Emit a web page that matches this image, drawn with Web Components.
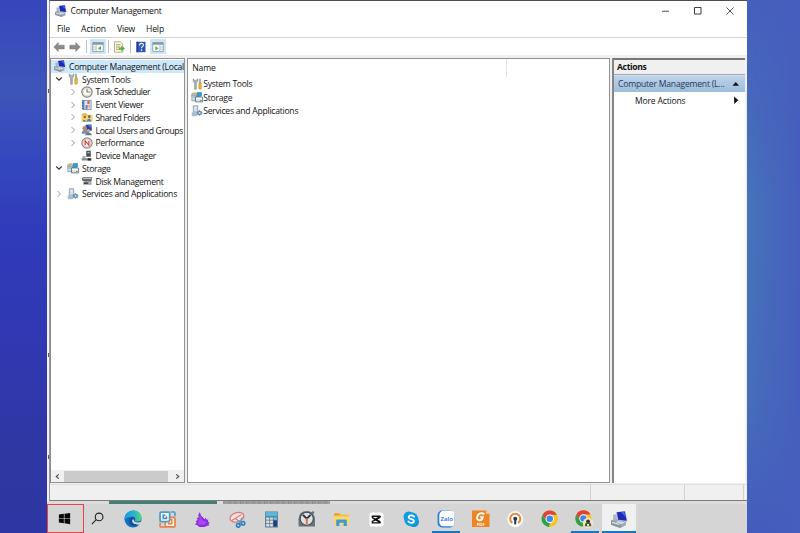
<!DOCTYPE html>
<html lang="en">
<head>
<meta charset="utf-8">
<title>Computer Management</title>
<style>
html,body{margin:0;width:800px;height:533px;overflow:hidden;font-family:"Open Sans","Noto Sans",sans-serif;font-size:8.6px;color:#111}
</style>
</head>
<body>
<desk-top></desk-top>
<script>
const ICONS = {
computer:`<path d="M0 9l5-2 9 3v3.500l-5 2.500L0 13z" fill="#9daab6"/><path d="M0 9l9 2.500V16L0 13z" fill="#8493a0"/><path d="M1 10.700l7 2" stroke="#e6eaed" stroke-width="1.200"/><path d="M2 3.500l3.500-.500V8L2 8.500z" fill="#a9b8c4"/><path d="M4.500 1l9-1 2 10-9-1z" fill="#b9c0d4"/><path d="M5.500 1.200l7.500-.800 1.800 8.800-8-.900z" fill="#1a2bb8"/><path d="M9.500 1.200l3-.400 1.200 5z" fill="#4a66de"/><path d="M6.500 9.700l6.500 1-3 1.500-5.500-1.500z" fill="#dce1e5"/>`,
tools:`<path d="M3 1v4l2 1.500V15h2V6.500L9 5V1L7 3.500H5z" fill="#b5babe" stroke="#71777b" stroke-width=".800"/><path d="M11 1h2v6h-2z" fill="#89949c"/><path d="M10.500 7h3.200v7.200q-1.600 1.500-3.200 0z" fill="#f3bd34" stroke="#a3771c" stroke-width=".700"/>`,
clock:`<circle cx="8" cy="8" r="6.900" fill="#eee9dc" stroke="#85857f" stroke-width="1.600"/><circle cx="8" cy="8" r="4.800" fill="#fff" stroke="#d9c99e" stroke-width=".700"/><path d="M8 4v4h3.600" fill="none" stroke="#555" stroke-width="1.200"/>`,
event:`<path d="M2 1.500h12v13H2z" fill="#687eae"/><path d="M4.500 2.500h8.500v11H4.500z" fill="#dee5f2"/><path d="M2 2v12" stroke="#303f68" stroke-width="1.500" stroke-dasharray="1 1"/><path d="M8.500 3h3v3.500h-3z" fill="#d65152"/><path d="M6 8h3v5H6z" fill="#6787c6"/><path d="M10 8h2v4h-2z" fill="#e3ae45"/>`,
folder:`<path d="M1 5l1-2h5l1 2h7v9H1z" fill="#deb850"/><path d="M1 6h14v8H1z" fill="#f2d680"/><circle cx="5" cy="8" r="1.700" fill="#a76432"/><path d="M2.500 14q0-5 5 0z" fill="#448b69"/><circle cx="11" cy="7.500" r="1.700" fill="#8c542d"/><path d="M7 14q4-8 7 0z" fill="#4f80bc"/>`,
users:`<path d="M6 1l8-.500.500 8-7 1z" fill="#2440ae"/><path d="M9 2l4-.300v3z" fill="#6d8ce0"/><circle cx="5" cy="5.500" r="3" fill="#bf8560"/><path d="M1 13q0-5 4-5t5 5z" fill="#748eae"/><circle cx="10" cy="9" r="2.200" fill="#d2a57c"/><path d="M5 15q5-8 10 0z" fill="#6b788b"/>`,
perf:`<circle cx="8" cy="8" r="6.800" fill="#fff" stroke="#888" stroke-width="1.600"/><path d="M5.500 11V5l5 6V5" fill="none" stroke="#cc3538" stroke-width="1.500"/><circle cx="8" cy="8" r="5.200" fill="none" stroke="#dc8585" stroke-width=".700"/>`,
device:`<path d="M7 1h6v8H7z" fill="#454c51"/><path d="M8.500 2.500h3v2h-3z" fill="#b3b9bc"/><path d="M2 8h4v4H2z" fill="#a7adb2"/><path d="M1 11h13v3H1z" fill="#83898d"/><path d="M9 11h4v3H9z" fill="#25292c"/>`,
storage:`<path d="M1 3l2-1.500h4l1 1.500h5v5H1z" fill="#ecc65a"/><path d="M2 5h11v8H2z" fill="#5da6ca"/><path d="M1 4h6v9H1z" fill="#d6dadc" stroke="#75848d" stroke-width=".800"/><path d="M2 6h4M2 8h4" stroke="#5d9cc0"/><path d="M8 1.500h6.500V7H8z" fill="#2f9bd0"/><path d="M6 8h9.500v6.500H6z" fill="#dde3e8" stroke="#4c6376"/><path d="M7 9h7.500v1.500H7z" fill="#fff"/><path d="M12 12h2v1.200h-2z" fill="#37a83c"/>`,
disk:`<path d="M1 5l2-2h12l-1 5H2z" fill="#606468"/><path d="M3 4h11v1.600H3z" fill="#b9bdc0"/><path d="M3 9l2-1h9v5H3z" fill="#989ca0"/><path d="M4 10h5v2H4z" fill="#3b3f43"/><path d="M11 10h2v1h-2z" fill="#e4e6e7"/>`,
services:`<path d="M3 1h6v12H3z" fill="#b8c7d3" stroke="#71889b" stroke-width=".800"/><path d="M4 3h4M4 5h4M4 7h4" stroke="#fff"/><path d="M1 10h7v5H1z" fill="#a6bdcf"/><circle cx="11.500" cy="10.500" r="3" fill="#7aa3c5"/><path d="M11.500 6.500v8M7.500 10.500h8M9 8l5 5M14 8l-5 5" stroke="#517fa9" stroke-width="1.100"/><circle cx="11.500" cy="10.500" r="1.200" fill="#e5eef4"/>`,
back:`<path d="M1 8l6-6v3.500h8v5H7V14z" fill="#8b8b8b" stroke="#6f6f6f" stroke-width=".600"/>`,
forward:`<path d="M15 8L9 2v3.500H1v5h8V14z" fill="#8b8b8b" stroke="#6f6f6f" stroke-width=".600"/>`,
panel:`<path d="M1 2h14v12H1z" fill="#f9fcfb" stroke="#83929b"/><path d="M1 2h14v3H1z" fill="#8798a3"/><path d="M5.500 5v9M1 8h4M1 11h4" stroke="#a5b3ba"/><path d="M12 6.500L8 9.500l4 3z" fill="#4cae4c"/>`,
panelr:`<path d="M1 2h14v12H1z" fill="#f9fcfb" stroke="#83929b"/><path d="M1 2h14v3H1z" fill="#8798a3"/><path d="M10.500 5v9M11 8h4M11 11h4" stroke="#a5b3ba"/><path d="M4.500 6.500l4 3-4 3z" fill="#4cae4c"/>`,
exportlist:`<path d="M2 1h8l3 3v11H2z" fill="#fff5cf" stroke="#a19a78"/><path d="M4 5h6M4 8h5M4 11h5" stroke="#827e69"/><path d="M8 8.500h3V6l5 4-5 4v-2.500H8z" fill="#55b34a"/>`,
help:`<path d="M2 1h12v14H2z" fill="#2e53bb"/><path d="M2 1h2v14H2z" fill="#213d8f"/><path d="M6 6q0-3 2.700-3 2.500 0 2.500 2.200 0 1.500-1.500 2.300-1 .600-1 2" fill="none" stroke="#fff" stroke-width="1.500"/><circle cx="8.700" cy="12.200" r="1.100" fill="#fff"/>`,
win:`<path d="M2 3.800l5.300-.800v4.600H2zM8 2.900l6-.900v5.600H8zM2 8.300h5.300v4.700L2 12.200zM8 8.300h6V14l-6-.900z" fill="#080808"/>`,
search:`<circle cx="9.700" cy="6.300" r="4.100" fill="none" stroke="#222" stroke-width="1.200"/><path d="M6.700 9.300L2 14" stroke="#222" stroke-width="1.200"/>`,
edge:`<defs><linearGradient id="a"><stop stop-color="#1998dc"/><stop offset=".600" stop-color="#28b9cf"/><stop offset="1" stop-color="#61d568"/></linearGradient></defs><circle cx="8" cy="8" r="7.600" fill="#1471c4"/><path d="M.500 8.500C.500-2 15.500-2 15.600 7c0 3-3.600 3.700-6 2.600 1.300-1.300.200-3.700-2.100-3.700C4 5.900 2 7 .500 8.500z" fill="url(#a)"/><path d="M4.400 10c0-2.200 1.500-3.600 3.200-4 2 .400 2.700 2.200 2 3.600-.800 1.500 2.100 3.700 5 1.800C10 16.500 4.400 14.500 4.400 10z" fill="#164f9d"/><path d="M9 8.500c-.800 2.500 3.500 3.600 7 1.500v2.500C11 14 7 12 7.200 9.500q.200-1.500 1.800-1z" fill="#d5d5d5"/>`,
vm:`<g fill="#f7f7f7" stroke-width="1.600"><path d="M8 6h6q1 0 1 1v7q0 1-1 1H7q-1 0-1-1V6z" stroke="#e58143"/><path d="M2 1h7q1 0 1 1v7q0 1-1 1H2q-1 0-1-1V2q0-1 1-1z" stroke="#4b9ac8"/></g><path d="M1 11v3q0 1 1 1h4" fill="none" stroke="#e58143" stroke-width="1.500"/><path d="M11 1h3q1 0 1 1v3" fill="none" stroke="#4b9ac8" stroke-width="1.500"/><path d="M6 4H4v3h3V5" fill="none" stroke="#3c91c3" stroke-width="1.500"/><path d="M9 9v3h3V8h-2" fill="none" stroke="#e58143" stroke-width="1.500"/>`,
horse:`<path d="M5.500 1l1 3.200L9 6.500l.500 1.500 1.500-1.700 1 2 1.500-.300-.300 2.300 1.800.500-1.400 1.200.800 1.500-2.500.700-2 .800H5L3.300 13.500 1 13l1.500-2L1.500 10 3.500 8 2.500 6.500 4.500 6 4 4z" fill="#8c2be0"/><path d="M5.500 4l2.500 5 4 1-2 3H5l-1.500-2L5 8z" fill="#a64af4"/>`,
snip:`<g transform="rotate(-18 7 6)"><ellipse cx="7.500" cy="6" rx="6.700" ry="4.300" fill="#f5e4e4" stroke="#dc7478" stroke-width="1.200"/><path d="M2 7.500L12 5" stroke="#d77e81"/></g><path d="M6 7l6.500 5M12.500 6L9 13" stroke="#8694a1" stroke-width="1.200"/><circle cx="13.200" cy="11.500" r="1.700" fill="none" stroke="#247fc4" stroke-width="1.400"/><circle cx="8.700" cy="13.500" r="1.700" fill="none" stroke="#247fc4" stroke-width="1.400"/>`,
calc:`<path d="M2 .500h12v15H2z" fill="#587586"/><path d="M2.500 1h11v4h-11z" fill="#57b9de"/><path d="M3 6h3v2.300H3zM6.700 6h2.600v2.300H6.700zM3 9h3v2.300H3zM6.700 9h2.600v2.300H6.700zM3 12h3v2.500H3zM6.700 12h2.600v2.500H6.700z" fill="#d6e0e4"/><path d="M10 6h3v2.300h-3z" fill="#79c8e5"/><path d="M10 9h3v5.500h-3z" fill="#173f80"/>`,
alarm:`<path d="M.500 15V8Q1 1 8 1q3 0 4 1l2-1 1 1-1 2q1.500 2 1.500 4v7z" fill="#69727a"/><circle cx="8" cy="8" r="6" fill="#dde1e3" stroke="#414b54"/><path d="M4.500 4.500L8 8l3.500-3.500" fill="none" stroke="#27323a" stroke-width="1.700"/><path d="M8 7.500V13" stroke="#dc7048" stroke-width="1.800"/>`,
explorer:`<path d="M1 2h5l1.500 1.500H15V13H1z" fill="#f4b93d"/><path d="M1 5h14v8H1z" fill="#ffd968"/><path d="M3 14V9q0-1 1-1h8q1 0 1 1v5h-3v-3H6v3z" fill="#3b9bd3"/><path d="M1 3h5" stroke="#d69523"/>`,
capcut:`<rect x=".500" y=".500" width="15" height="15" rx="3" fill="#fff"/><path d="M3.500 6V4.500h8V6l-8 4v1.500h8V10l-8-4M12.500 4.500L10 6l-4 2 4 2 2.500 1.500" fill="none" stroke="#111" stroke-width="1.400"/>`,
skype:`<circle cx="5.500" cy="5.500" r="5" fill="#0c9dde"/><circle cx="10.500" cy="10.500" r="5" fill="#0d8cdb"/><circle cx="8" cy="8" r="6.800" fill="#0a9ee1"/><path d="M10.800 5.500C9.500 3.700 5.300 4 5.500 6.200 5.700 8.500 10.600 7.400 10.600 9.700 10.600 12 6.500 12 5.200 10.200" fill="none" stroke="#fff" stroke-width="1.700" stroke-linecap="round"/>`,
zalo:`<rect x=".500" y=".500" width="15" height="15" rx="4" fill="#277de2"/><path d="M5 .700h7q3.500 0 3.500 3.500v7.300q0 3-3 3H6q-3.700 0-4-4V5q0-3 3-4.300z" fill="#fff"/><text x="8.700" y="9.500" text-anchor="middle" font-size="5.400" font-family="Open Sans" font-weight="600" fill="#246fd2">Zalo</text>`,
pdf:`<path d="M0 .500h13l3 3v12H0z" fill="#ef8421"/><path d="M13 .500v3h3z" fill="#ffd4a7"/><path d="M11.500 3.500q-4-1.500-6 1-2.300 4 1 5 2.500.200 3.500-3H7.500" fill="none" stroke="#fff" stroke-width="1.700"/><text x="8" y="14.600" text-anchor="middle" font-size="3.800" font-family="Open Sans" font-weight="700" fill="#fff">PDF</text>`,
vpn:`<circle cx="8" cy="8" r="7.700" fill="#fff"/><path d="M5.200 11.500A4.900 4.900 0 1 1 10.800 11.500" fill="none" stroke="#e48a35" stroke-width="2"/><circle cx="8" cy="7.500" r="1.900" fill="#263a55"/><path d="M7 8h2v5H7z" fill="#263a55"/>`,
chrome:`<circle cx="8" cy="8" r="7.500" fill="#f6c528"/><path d="M1.500 4.250A7.500 7.500 0 0 1 14.500 4.250H8L4.700 9.900z" fill="#df4237"/><path d="M1.500 4.250L4.800 9.900 8 11.700 7.400 15.500A7.500 7.500 0 0 1 1.500 4.250z" fill="#2ca04c"/><circle cx="8" cy="8" r="3.900" fill="#fff"/><circle cx="8" cy="8" r="3" fill="#4187e6"/>`,
chromep:`<circle cx="7.300" cy="7.300" r="7" fill="#f6c528"/><path d="M1.200 3.800A7 7 0 0 1 13.400 3.800H7.300L4.300 9z" fill="#df4237"/><path d="M1.200 3.800L4.300 9l3 1.800-.600 3.500A7 7 0 0 1 1.200 3.800z" fill="#2ca04c"/><circle cx="7.300" cy="7.300" r="3.600" fill="#fff"/><circle cx="7.300" cy="7.300" r="2.800" fill="#4187e6"/><circle cx="11.300" cy="11.300" r="4.500" fill="#eee8bf"/><circle cx="11.300" cy="9.800" r="1.600" fill="#303028"/><path d="M8.500 14q0-3.700 2.800-3.700t2.800 3.700z" fill="#55513e"/><path d="M10.500 12h1.600v1.600h-1.600z" fill="#fff"/>`,
down:`<path d="M2.500 5l5.500 5.500L13.500 5" fill="none" stroke="#333" stroke-width="2.200"/>`,
right:`<path d="M5 2l6 6-6 6" fill="none" stroke="#939393" stroke-width="1.900"/>`,
sleft:`<path d="M11 3L5 8l6 5" fill="none" stroke="#444" stroke-width="2.400"/>`,
sright:`<path d="M5 3l6 5-6 5" fill="none" stroke="#444" stroke-width="2.400"/>`,
min:`<path d="M0 8.500h14" stroke="#333" stroke-width="1.700"/>`,
max:`<path d="M1 1h13v13H1z" fill="none" stroke="#333" stroke-width="1.900"/>`,
close:`<path d="M1 1l14 14M15 1L1 15" stroke="#333" stroke-width="1.700"/>`,
triup:`<path d="M1 12l7-8 7 8z" fill="#111"/>`,
triright:`<path d="M4 1l8 7-8 7z" fill="#111"/>`
};

const define = (name, html, setup) => {
  const template = document.createElement('template');
  template.innerHTML = html;
  customElements.define(name, class extends HTMLElement {
    connectedCallback() {
      if (this.shadowRoot) return;
      this.attachShadow({mode: 'open'}).append(template.content.cloneNode(true));
      if (setup) setup(this, this.shadowRoot);
    }
  });
};

define('sys-icon', `<style>:host{display:block;flex:none}svg{display:block;width:100%;height:100%;overflow:visible}</style><svg viewBox="0 0 16 16"></svg>`, (h, r) => {
  h.style.width = h.style.height = (h.getAttribute('size') || 11) + 'px';
  r.querySelector('svg').innerHTML = ICONS[h.getAttribute('name')];
});

// Label that spreads its letters so the line spans the given width.
define('fit-text', `<style>:host{display:block;flex:none;white-space:nowrap;line-height:12px;padding-top:.8px}span{display:inline-block}</style><span></span>`, (h, r) => {
  const s = r.querySelector('span'), t = h.getAttribute('text');
  s.textContent = t;
  const w = +h.getAttribute('width');
  s.style.letterSpacing = (w - s.getBoundingClientRect().width) / t.length + 'px';
  h.style.width = w + 'px';
});

define('tree-item', `<style>
:host{display:flex;align-items:center;height:12.75px;box-sizing:border-box}
:host([selected]){background:#cde8fa}
.c{width:10px;display:flex;justify-content:center;flex:none}
:host([selected]) .c{display:none}
.i{margin:0 3px}
</style><span class="c"></span>`, (h, r) => {
  h.style.paddingLeft = h.getAttribute('indent') + 'px';
  const c = h.getAttribute('chevron'), box = r.querySelector('.c');
  if (c) box.innerHTML = `<sys-icon name="${c}" size="8"></sys-icon>`;
  box.insertAdjacentHTML('afterend', `<sys-icon class="i" name="${h.getAttribute('icon')}" size="12"></sys-icon><fit-text text="${h.getAttribute('label')}" width="${h.getAttribute('w')}"></fit-text>`);
});

define('list-item', `<style>:host{display:flex;align-items:center;height:13.5px;padding-left:3px;gap:.5px}</style>`, (h, r) => {
  r.innerHTML += `<sys-icon name="${h.getAttribute('icon')}" size="12"></sys-icon><fit-text text="${h.getAttribute('label')}" width="${h.getAttribute('w')}"></fit-text>`;
});

define('tool-button', `<style>:host{display:flex;align-items:center;justify-content:center;width:16px;height:15px;flex:none}:host([on]){background:#cce6f8}</style><slot></slot>`);

define('task-item', `<style>
:host{display:flex;align-items:center;justify-content:center;box-sizing:border-box;height:29px;width:34.75px;flex:none;padding-top:1px}
:host([start]){border:1.5px solid #ec4346;width:37px;padding:0 3px 0 0}
:host([open]){background:linear-gradient(#1379c6,#1379c6) center bottom/28px 2px no-repeat}
:host([active]){background:linear-gradient(#1379c6,#1379c6) center bottom/34px 2px no-repeat,linear-gradient(#f0f0f0,#f0f0f0) center/34px 29px no-repeat}
</style><slot></slot>`);

define('tree-pane', `<style>
:host{display:flex;flex-direction:column;box-sizing:border-box;border:1px solid #929292;border-left-color:#8b8b8b;background:#fff;overflow:hidden}
.rows{flex:1;padding-top:1px}
.bar{display:flex;align-items:center;justify-content:space-between;height:12px;padding:0 3px;background:#f0f0f0}
.thumb{flex:none;width:104px;height:11px;margin-right:3px;background:#cbcbcb}
</style><div class="rows">
<tree-item selected indent="0" icon="computer" label="Computer Management (Local" w="115"></tree-item>
<tree-item indent="3" chevron="down" icon="tools" label="System Tools" w="48.5"></tree-item>
<tree-item indent="16.5" chevron="right" icon="clock" label="Task Scheduler" w="54.5"></tree-item>
<tree-item indent="16.5" chevron="right" icon="event" label="Event Viewer" w="48"></tree-item>
<tree-item indent="16.5" chevron="right" icon="folder" label="Shared Folders" w="54.5"></tree-item>
<tree-item indent="16.5" chevron="right" icon="users" label="Local Users and Groups" w="87.5"></tree-item>
<tree-item indent="16.5" chevron="right" icon="perf" label="Performance" w="48.5"></tree-item>
<tree-item indent="16.5" icon="device" label="Device Manager" w="60.5"></tree-item>
<tree-item indent="3" chevron="down" icon="storage" label="Storage" w="28.5"></tree-item>
<tree-item indent="16.5" icon="disk" label="Disk Management" w="68"></tree-item>
<tree-item indent="3" chevron="right" icon="services" label="Services and Applications" w="95"></tree-item>
</div><div class="bar"><sys-icon name="sleft" size="7"></sys-icon><div class="thumb"></div><sys-icon name="sright" size="7"></sys-icon></div>`);

define('list-pane', `<style>
:host{display:flex;flex-direction:column;box-sizing:border-box;border:1px solid #929292;background:#fff}
.head{height:18px;width:319px;box-sizing:border-box;border-right:1px solid #e3e3e3;display:flex;align-items:center;padding:0 0 0 4.5px}
</style><div class="head"><fit-text text="Name" width="23.5"></fit-text></div>
<list-item icon="tools" label="System Tools" w="49"></list-item>
<list-item icon="storage" label="Storage" w="29"></list-item>
<list-item icon="services" label="Services and Applications" w="95"></list-item>`);

define('actions-pane', `<style>
:host{display:flex;flex-direction:column;box-sizing:border-box;border:solid #777;border-width:2px 0 0 2px;border-left-color:#858585;background:#fff}
.h{height:15px;background:#f0f0f0;border-bottom:1px solid #a9a9a9;display:flex;align-items:center;padding:0 0 0 3px;font-weight:700;box-sizing:border-box}
.b{height:17px;background:linear-gradient(#bdd3e9,#9dbddc);display:flex;align-items:center;justify-content:space-between;padding:0 5px 0 4px;color:#1e395b;box-sizing:border-box;border-top:1px solid #d0dfed}
.m{height:17px;padding:0 4px 0 21px;display:flex;align-items:center;justify-content:space-between}
</style><div class="h"><fit-text text="Actions" width="29.5"></fit-text></div>
<div class="b"><fit-text text="Computer Management (L..." width="106.5"></fit-text><sys-icon name="triup" size="7.5"></sys-icon></div>
<div class="m"><fit-text text="More Actions" width="50.5"></fit-text><sys-icon name="triright" size="8.5"></sys-icon></div>`);

define('mmc-window', `<style>
:host{display:flex;flex-direction:column;box-sizing:border-box;height:501px;border-top:1px solid #4c4c58;border-bottom:1.5px solid #7c7c7c;border-left:1px solid #999;background:#f0f0f0}
.title{height:20px;background:#fff;display:flex;align-items:center;padding:0 12.5px 0 5px;gap:3.5px}
.title .s{flex:1}.title .win{margin-left:20.5px}
.menu{height:16px;background:#fff;border-bottom:1px solid #d3d3d3;display:flex;align-items:center;padding-left:7px;gap:11px}
.tools{height:17px;background:#fff;display:flex;align-items:center;padding-left:1px}
.sep{width:1px;height:13px;background:#bdbdbd;margin:0 2.5px 0 3px}
.sep.t{margin:0 2px 0 2px}
.body{height:425px;margin-top:3px;display:grid;grid-template-columns:134.5px 423px 132.5px;column-gap:2.25px}
.status{flex:1;display:flex;margin-top:1px;border-top:1px solid #dfdfdf}
.status i{box-sizing:border-box;border-right:1px solid #d2d2d2}
</style>
<div class="title"><sys-icon name="computer" size="12"></sys-icon><fit-text text="Computer Management" width="91"></fit-text><span class="s"></span><sys-icon class="win" name="min" size="8"></sys-icon><sys-icon class="win" name="max" size="8"></sys-icon><sys-icon class="win" name="close" size="8"></sys-icon></div>
<div class="menu"><fit-text text="File" width="13"></fit-text><fit-text text="Action" width="25"></fit-text><fit-text text="View" width="18"></fit-text><fit-text text="Help" width="18"></fit-text></div>
<div class="tools"><tool-button><sys-icon name="back" size="12"></sys-icon></tool-button><tool-button><sys-icon name="forward" size="12"></sys-icon></tool-button><span class="sep"></span><tool-button on><sys-icon name="panel" size="12"></sys-icon></tool-button><span class="sep t"></span><tool-button><sys-icon name="exportlist" size="12"></sys-icon></tool-button><span class="sep"></span><tool-button><sys-icon name="help" size="12"></sys-icon></tool-button><tool-button on style="margin-left:1px"><sys-icon name="panelr" size="12"></sys-icon></tool-button></div>
<div class="body"><tree-pane></tree-pane><list-pane></list-pane><actions-pane></actions-pane></div>
<div class="status"><i style="width:541px"></i><i style="width:94px"></i><i style="width:59px"></i></div>`);

const tasks = [['edge',18],['vm',17],['horse',17],['snip',17],['calc',17],['alarm',17.5],['explorer',17],['capcut',15],['skype',16.5],['zalo',18,'open'],['pdf',17.5],['vpn',16.5],['chrome',17.5],['chromep',18.5,'open'],['computer',17,'active']];
define('task-bar', `<style>
:host{display:flex;height:29px;background:#d5d5d5}
.search{width:31.5px;padding:0 5px 0 0}
</style><task-item start><sys-icon name="win" size="15"></sys-icon></task-item><task-item class="search"><sys-icon name="search" size="15"></sys-icon></task-item>` +
tasks.map(([n, s, m = '']) => `<task-item ${m}><sys-icon name="${n}" size="${s}"></sys-icon></task-item>`).join(''));

define('desk-top', `<style>
:host{display:grid;grid-template-columns:47px 699.5px 53.5px;width:800px;height:533px;overflow:hidden}
.l{background:linear-gradient(180deg,#3746bb 0,#3e55b8 17%,#3548be 29%,#303bbb 43%,#3038b0 68%,#2f37a2 85%,#2d36a2)}
.r{background:linear-gradient(90deg,transparent 10%,#465ebd),linear-gradient(#455fbd,#4672ba 40%,#466cba 75%,#445bbd)}
.main{display:flex;flex-direction:column;background:#d5d5d5}
.top{display:grid;grid-template-columns:2px 1fr;background:#eee}
.edge{display:flex;flex-direction:column;align-items:flex-end;background:#f2f2f5}
.edge i{width:1px;height:4px;background:#555a68;margin-top:260px}
.edge i:first-child{margin-top:89px}
.edge i:last-child{margin-top:98px}
.strip{height:3px;display:flex;background:#dcdcdc}
.strip b{width:108px;margin-left:62px;background:#458078}
.strip i{width:107px;margin-left:6px;background:repeating-linear-gradient(90deg,#999 0 3px,#a4a2a0 3px 5px,#8f8f8f 5px 6px)}
</style><div class="l"></div><div class="main"><div class="top"><div class="edge"><i></i><i></i><i></i></div><mmc-window></mmc-window></div><div class="strip"><b></b><i></i></div><task-bar></task-bar></div><div class="r"></div>`);
</script>
</body>
</html>
